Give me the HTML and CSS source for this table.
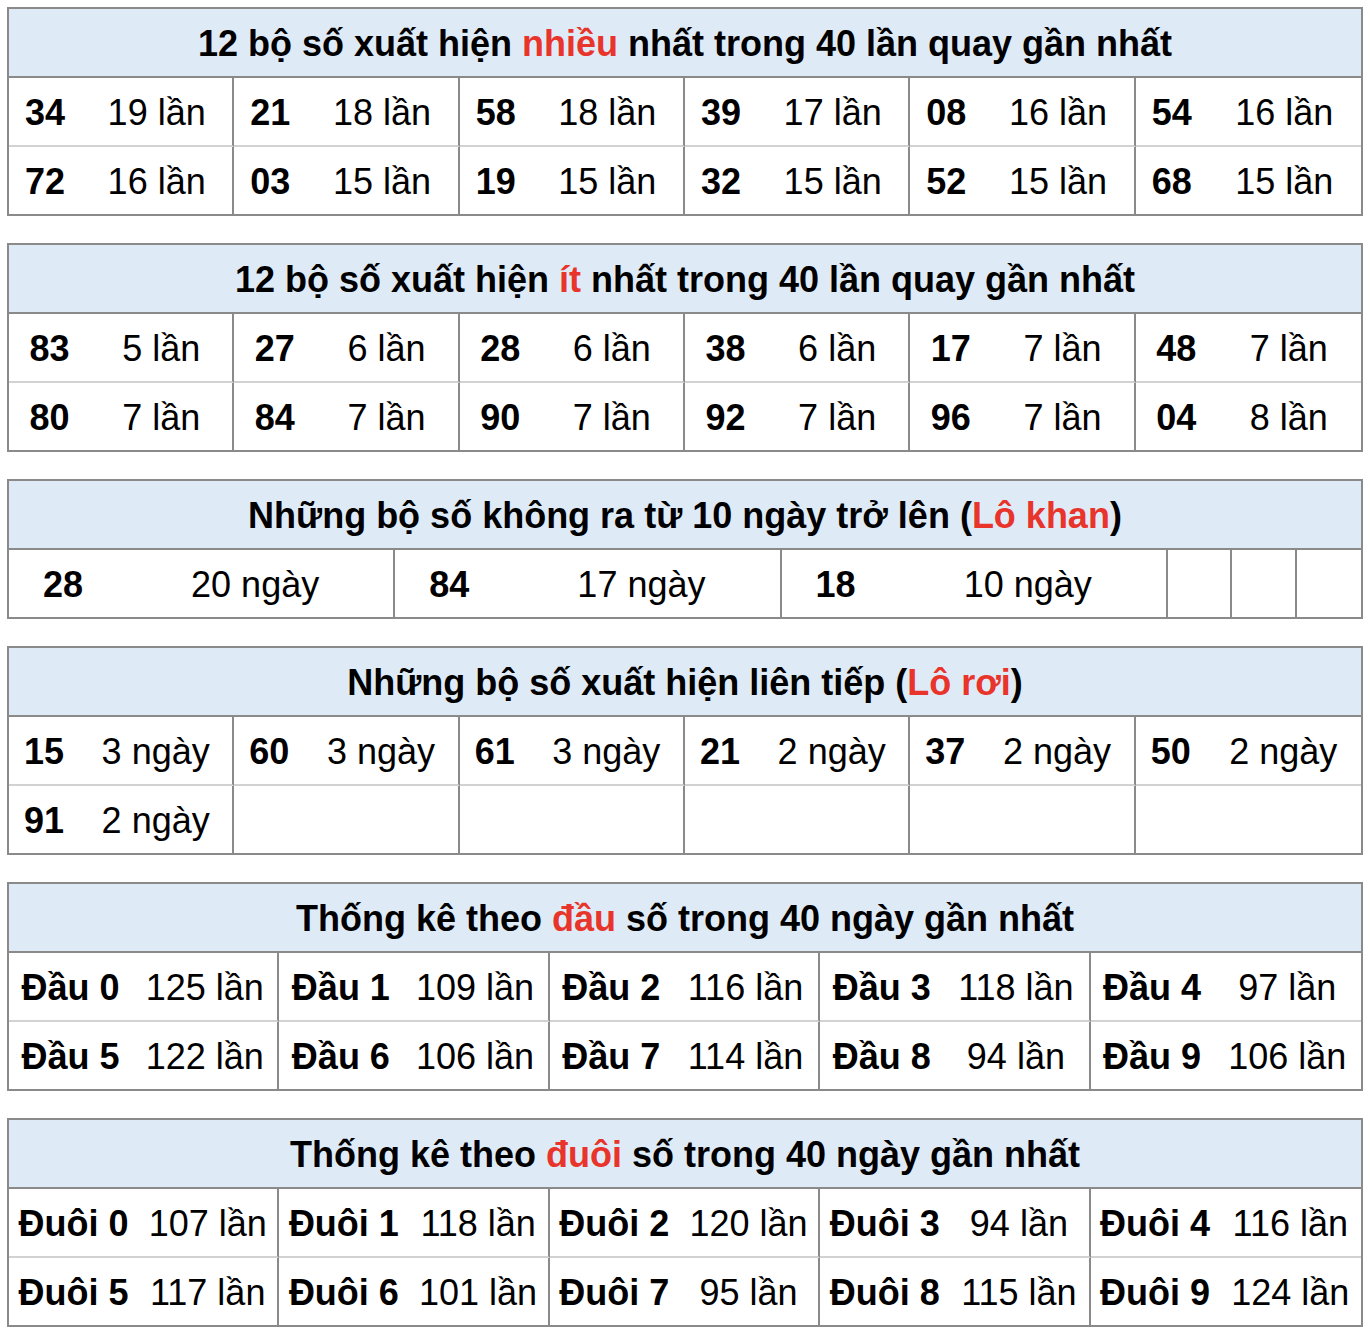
FILE: index.html
```html
<!DOCTYPE html>
<html lang="vi">
<head>
<meta charset="utf-8">
<title>Thống kê</title>
<link rel="stylesheet" href="styles.css">
</head>
<body>
<div class="page">

  <section class="tbl t1">
    <div class="hd">12 bộ số xuất hiện&nbsp;<span class="red">nhiều</span>&nbsp;nhất trong 40 lần quay gần nhất</div>
    <div class="rows cols6">
      <div class="g"><span class="n">34</span><span class="c">19 lần</span></div>
      <div class="g"><span class="n">21</span><span class="c">18 lần</span></div>
      <div class="g"><span class="n">58</span><span class="c">18 lần</span></div>
      <div class="g"><span class="n">39</span><span class="c">17 lần</span></div>
      <div class="g"><span class="n">08</span><span class="c">16 lần</span></div>
      <div class="g"><span class="n">54</span><span class="c">16 lần</span></div>
      <div class="g last"><span class="n">72</span><span class="c">16 lần</span></div>
      <div class="g last"><span class="n">03</span><span class="c">15 lần</span></div>
      <div class="g last"><span class="n">19</span><span class="c">15 lần</span></div>
      <div class="g last"><span class="n">32</span><span class="c">15 lần</span></div>
      <div class="g last"><span class="n">52</span><span class="c">15 lần</span></div>
      <div class="g last"><span class="n">68</span><span class="c">15 lần</span></div>
    </div>
  </section>

  <section class="tbl t2">
    <div class="hd">12 bộ số xuất hiện&nbsp;<span class="red">ít</span>&nbsp;nhất trong 40 lần quay gần nhất</div>
    <div class="rows cols6">
      <div class="g"><span class="n">83</span><span class="c">5 lần</span></div>
      <div class="g"><span class="n">27</span><span class="c">6 lần</span></div>
      <div class="g"><span class="n">28</span><span class="c">6 lần</span></div>
      <div class="g"><span class="n">38</span><span class="c">6 lần</span></div>
      <div class="g"><span class="n">17</span><span class="c">7 lần</span></div>
      <div class="g"><span class="n">48</span><span class="c">7 lần</span></div>
      <div class="g last"><span class="n">80</span><span class="c">7 lần</span></div>
      <div class="g last"><span class="n">84</span><span class="c">7 lần</span></div>
      <div class="g last"><span class="n">90</span><span class="c">7 lần</span></div>
      <div class="g last"><span class="n">92</span><span class="c">7 lần</span></div>
      <div class="g last"><span class="n">96</span><span class="c">7 lần</span></div>
      <div class="g last"><span class="n">04</span><span class="c">8 lần</span></div>
    </div>
  </section>

  <section class="tbl t3">
    <div class="hd">Những bộ số không ra từ 10 ngày trở lên (<span class="red">Lô khan</span>)</div>
    <div class="rows colsKhan">
      <div class="g last"><span class="n">28</span><span class="c">20 ngày</span></div>
      <div class="g last"><span class="n">84</span><span class="c">17 ngày</span></div>
      <div class="g last"><span class="n">18</span><span class="c">10 ngày</span></div>
      <div class="g last"></div>
      <div class="g last"></div>
      <div class="g last"></div>
    </div>
  </section>

  <section class="tbl t4">
    <div class="hd">Những bộ số xuất hiện liên tiếp (<span class="red">Lô rơi</span>)</div>
    <div class="rows cols6">
      <div class="g"><span class="n">15</span><span class="c">3 ngày</span></div>
      <div class="g"><span class="n">60</span><span class="c">3 ngày</span></div>
      <div class="g"><span class="n">61</span><span class="c">3 ngày</span></div>
      <div class="g"><span class="n">21</span><span class="c">2 ngày</span></div>
      <div class="g"><span class="n">37</span><span class="c">2 ngày</span></div>
      <div class="g"><span class="n">50</span><span class="c">2 ngày</span></div>
      <div class="g last"><span class="n">91</span><span class="c">2 ngày</span></div>
      <div class="g last"></div>
      <div class="g last"></div>
      <div class="g last"></div>
      <div class="g last"></div>
      <div class="g last"></div>
    </div>
  </section>

  <section class="tbl t5">
    <div class="hd">Thống kê theo&nbsp;<span class="red">đầu</span>&nbsp;số trong 40 ngày gần nhất</div>
    <div class="rows cols5">
      <div class="g"><span class="n">Đầu 0</span><span class="c">125 lần</span></div>
      <div class="g"><span class="n">Đầu 1</span><span class="c">109 lần</span></div>
      <div class="g"><span class="n">Đầu 2</span><span class="c">116 lần</span></div>
      <div class="g"><span class="n">Đầu 3</span><span class="c">118 lần</span></div>
      <div class="g"><span class="n">Đầu 4</span><span class="c">97 lần</span></div>
      <div class="g last"><span class="n">Đầu 5</span><span class="c">122 lần</span></div>
      <div class="g last"><span class="n">Đầu 6</span><span class="c">106 lần</span></div>
      <div class="g last"><span class="n">Đầu 7</span><span class="c">114 lần</span></div>
      <div class="g last"><span class="n">Đầu 8</span><span class="c">94 lần</span></div>
      <div class="g last"><span class="n">Đầu 9</span><span class="c">106 lần</span></div>
    </div>
  </section>

  <section class="tbl t6">
    <div class="hd">Thống kê theo&nbsp;<span class="red">đuôi</span>&nbsp;số trong 40 ngày gần nhất</div>
    <div class="rows cols5">
      <div class="g"><span class="n">Đuôi 0</span><span class="c">107 lần</span></div>
      <div class="g"><span class="n">Đuôi 1</span><span class="c">118 lần</span></div>
      <div class="g"><span class="n">Đuôi 2</span><span class="c">120 lần</span></div>
      <div class="g"><span class="n">Đuôi 3</span><span class="c">94 lần</span></div>
      <div class="g"><span class="n">Đuôi 4</span><span class="c">116 lần</span></div>
      <div class="g last"><span class="n">Đuôi 5</span><span class="c">117 lần</span></div>
      <div class="g last"><span class="n">Đuôi 6</span><span class="c">101 lần</span></div>
      <div class="g last"><span class="n">Đuôi 7</span><span class="c">95 lần</span></div>
      <div class="g last"><span class="n">Đuôi 8</span><span class="c">115 lần</span></div>
      <div class="g last"><span class="n">Đuôi 9</span><span class="c">124 lần</span></div>
    </div>
  </section>

</div>
</body>
</html>
```

FILE: styles.css
```css
* { box-sizing: border-box; }

html, body {
  margin: 0;
  padding: 0;
  background: #ffffff;
}

body {
  font-family: "Liberation Sans", Arial, Helvetica, sans-serif;
  font-size: 36px;
  color: #000000;
}

.page {
  padding: 7px 0 0 7px;
  display: flex;
  flex-direction: column;
  gap: 27px;
}

.tbl {
  width: 1356px;
  border: 2px solid #8a8a8a;
  background: #ffffff;
}

.hd {
  height: 69px;
  border-bottom: 2px solid #8a8a8a;
  background: #deebf7;
  display: flex;
  align-items: center;
  justify-content: center;
  font-weight: bold;
  white-space: nowrap;
  padding-top: 3px;
}

.red { color: #e8342a; }

.rows { display: grid; }
.cols6 { grid-template-columns: repeat(6, 1fr); }
.cols5 { grid-template-columns: repeat(5, 1fr); }
.colsKhan { grid-template-columns: 3fr 3fr 3fr 0.5fr 0.5fr 0.5fr; }

.g {
  height: 69px;
  display: flex;
  align-items: center;
  border-right: 2px solid #8a8a8a;
  border-bottom: 2px solid #d2d2d2;
  white-space: nowrap;
  min-width: 0;
  padding-top: 3px;
}
.g.last { border-bottom: none; height: 67px; }
.cols6 .g:nth-child(6n),
.cols5 .g:nth-child(5n),
.colsKhan .g:nth-child(6) { border-right: none; }

.n {
  font-weight: bold;
  text-align: center;
  flex: none;
}
.c {
  flex: 1;
  text-align: center;
}

.t1 .n { width: 72px; }
.t2 .n { width: 81px; }
.t3 .n { width: 108px; }
.t4 .n { width: 70px; }
.t5 .n { width: 123px; }
.t6 .n { width: 129px; }
```
